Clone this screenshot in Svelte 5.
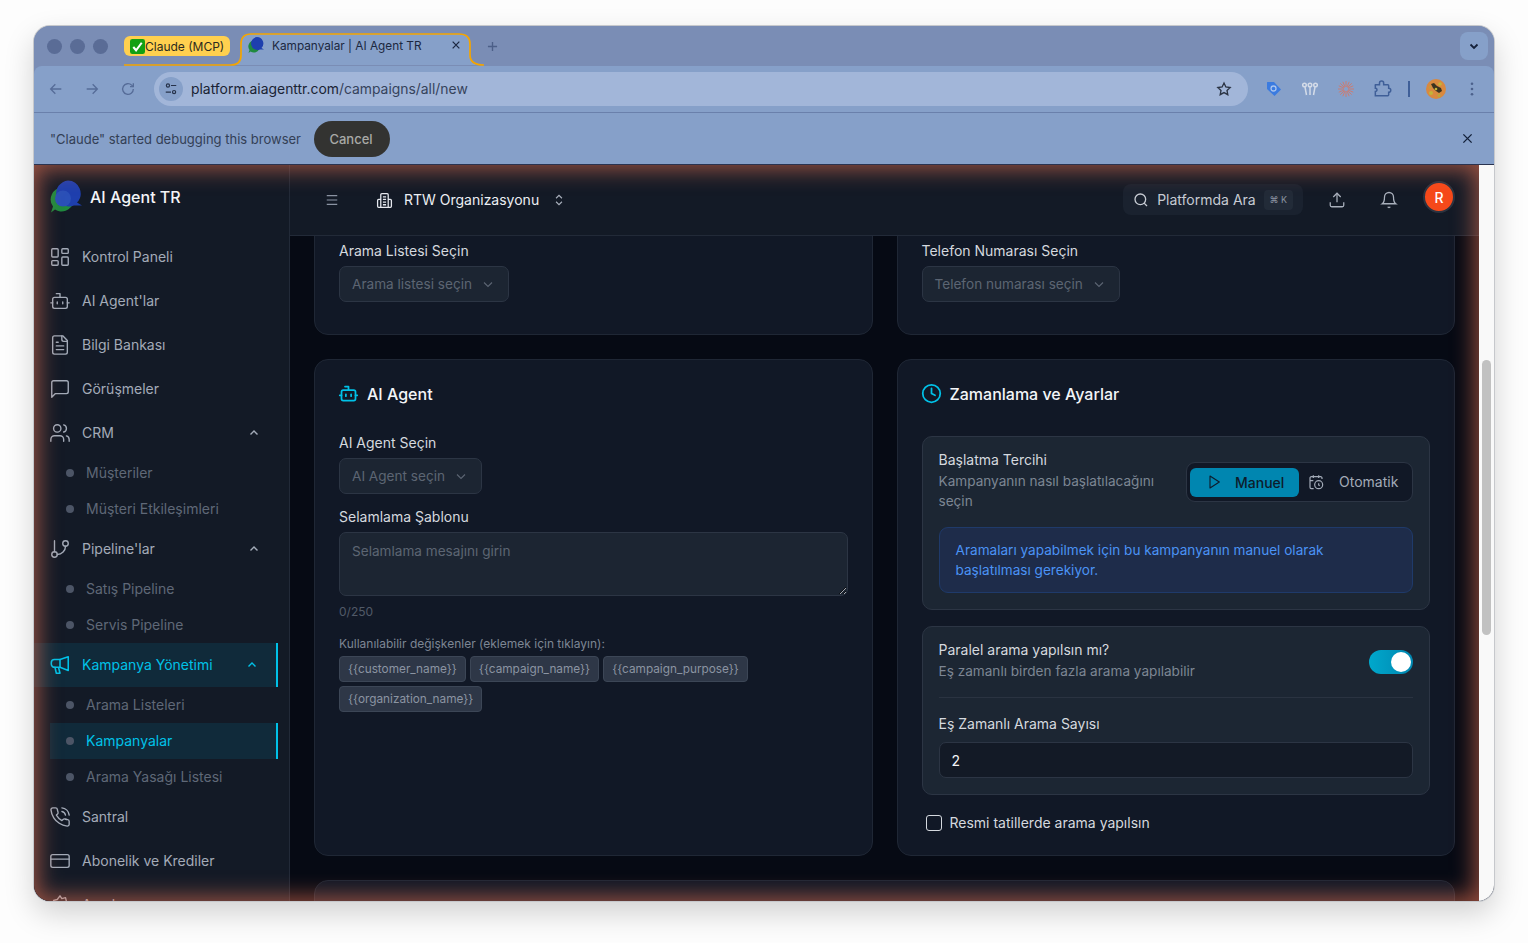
<script>
  const icons = {
    dashboard: '<rect width="7" height="9" x="3" y="3" rx="1"/><rect width="7" height="5" x="14" y="3" rx="1"/><rect width="7" height="9" x="14" y="12" rx="1"/><rect width="7" height="5" x="3" y="16" rx="1"/>',
    bot: '<path d="M12 8V4H8"/><rect width="16" height="12" x="4" y="8" rx="2"/><path d="M2 14h2"/><path d="M20 14h2"/><path d="M15 13v2"/><path d="M9 13v2"/>',
    file: '<path d="M15 2H6a2 2 0 0 0-2 2v16a2 2 0 0 0 2 2h12a2 2 0 0 0 2-2V7Z"/><path d="M14 2v4a2 2 0 0 0 2 2h4"/><path d="M10 9H8"/><path d="M16 13H8"/><path d="M16 17H8"/>',
    message: '<path d="M21 15a2 2 0 0 1-2 2H7l-4 4V5a2 2 0 0 1 2-2h14a2 2 0 0 1 2 2z"/>',
    users: '<path d="M16 21v-2a4 4 0 0 0-4-4H6a4 4 0 0 0-4 4v2"/><circle cx="9" cy="7" r="4"/><path d="M22 21v-2a4 4 0 0 0-3-3.87"/><path d="M16 3.13a4 4 0 0 1 0 7.75"/>',
    branch: '<line x1="6" x2="6" y1="3" y2="15"/><circle cx="18" cy="6" r="3"/><circle cx="6" cy="18" r="3"/><path d="M18 9a9 9 0 0 1-9 9"/>',
    megaphone: '<path d="M21 3v15l-9-3.5H6a3.5 3.5 0 0 1-3.500-3.500V9.500A3.500 3.500 0 0 1 6 6h6z"/><path d="M12 6v8.500"/><path d="M6.500 14.500l1.500 6.500h4l-1.500-6"/>',
    phone: '<path d="M22 16.920v3a2 2 0 0 1-2.180 2 19.790 19.790 0 0 1-8.630-3.070 19.500 19.500 0 0 1-6-6 19.790 19.790 0 0 1-3.070-8.670A2 2 0 0 1 4.110 2h3a2 2 0 0 1 2 1.720 12.840 12.840 0 0 0 .7 2.810 2 2 0 0 1-.45 2.110L8.090 9.910a16 16 0 0 0 6 6l1.270-1.270a2 2 0 0 1 2.110-.45 12.840 12.840 0 0 0 2.810.7A2 2 0 0 1 22 16.920z"/><path d="M14.050 2a9 9 0 0 1 8 7.940"/><path d="M14.050 6A5 5 0 0 1 18 10"/>',
    card: '<rect width="20" height="14" x="2" y="5" rx="2"/><line x1="2" x2="22" y1="10" y2="10"/>',
    settings: '<circle cx="12" cy="12" r="3"/><path d="M12 2l2 3 4-1 1 4 3 2-2 3 1 4-4 1-2 3-3-2-4 1-1-4-3-2 2-3-1-4 4-1z"/>'
  };

  const nav = [
    { label: "Kontrol Paneli", icon: "dashboard" },
    { label: "AI Agent'lar", icon: "bot" },
    { label: "Bilgi Bankası", icon: "file" },
    { label: "Görüşmeler", icon: "message" },
    { label: "CRM", icon: "users", open: true, children: [{ label: "Müşteriler" }, { label: "Müşteri Etkileşimleri" }] },
    { label: "Pipeline'lar", icon: "branch", open: true, children: [{ label: "Satış Pipeline" }, { label: "Servis Pipeline" }] },
    {
      label: "Kampanya Yönetimi",
      icon: "megaphone",
      open: true,
      active: true,
      children: [{ label: "Arama Listeleri" }, { label: "Kampanyalar", active: true }, { label: "Arama Yasağı Listesi" }]
    },
    { label: "Santral", icon: "phone" },
    { label: "Abonelik ve Krediler", icon: "card" },
    { label: "Ayarlar", icon: "settings" }
  ];

  const variables = ["{{customer_name}}", "{{campaign_name}}", "{{campaign_purpose}}", "{{organization_name}}"];
</script>

<div class="page">
  <div class="window">
    <div class="tabbar">
      <div class="lights"><span></span><span></span><span></span></div>
      <div class="group-chip">
        <svg class="check" viewBox="0 0 16 16"><rect width="16" height="16" rx="2.500" fill="#12a012" /><path d="M3.500 8.500l3 3.500 6-8" fill="none" stroke="#fff" stroke-width="2.200" /></svg>
        Claude (MCP)
      </div>
      <svg class="group-line" viewBox="0 0 370 36" fill="none">
        <path d="M107 34q10 0 10-10V13q0-10 10-10h208q11 0 11 10v11q0 10 10 10z" fill="#86a0c9" />
        <path d="M0 34h107q10 0 10-10V13q0-10 10-10h208q11 0 11 10v11q0 10 14 10" stroke="#f5a500" stroke-width="1.700" />
      </svg>
      <div class="tab">
        <svg class="favicon" viewBox="0 0 32 32">
          <path d="M12 7a12 12 0 1 1-7 22l-4 3 2-6A12 12 0 0 1 12 7z" fill="#1f8a3f" />
          <path d="M18 0a13 13 0 0 1 9 22l5 3-8 0A13 13 0 1 1 18 0z" fill="#1e3fae" />
        </svg>
        <span class="tab-title">Kampanyalar | AI Agent TR</span>
        <svg class="tab-x" viewBox="0 0 12 12" fill="none" stroke="#1d2a44" stroke-width="1.500"><path d="M2 2l8 8M10 2l-8 8" /></svg>
      </div>
      <svg class="plus" viewBox="0 0 12 12" fill="none" stroke="#4c5f88" stroke-width="1.500"><path d="M6 1v10M1 6h10" /></svg>
      <div class="tab-menu">
        <svg viewBox="0 0 12 12" fill="none" stroke="#15213a" stroke-width="1.800"><path d="M2.500 4.500L6 8l3.500-3.500" /></svg>
      </div>
    </div>

    <div class="toolbar">
      <svg class="tool" viewBox="0 0 24 24" fill="none" stroke="#566c98" stroke-width="2"><path d="M20 12H5M11 5l-7 7 7 7" /></svg>
      <svg class="tool" viewBox="0 0 24 24" fill="none" stroke="#566c98" stroke-width="2"><path d="M4 12h15M13 5l7 7-7 7" /></svg>
      <svg class="tool" viewBox="0 0 24 24" fill="none" stroke="#566c98" stroke-width="2"><path d="M20 12a8 8 0 1 1-2.500-5.800L20 8.500" /><path d="M20 3.500v5h-5" /></svg>
      <div class="urlbar">
        <div class="tune">
          <svg viewBox="0 0 16 16" fill="none" stroke="#26324a" stroke-width="1.400"><circle cx="4.500" cy="4" r="1.800" /><path d="M8 4h6M2 11.500h6" /><circle cx="11.500" cy="11.500" r="1.800" /></svg>
        </div>
        <span class="url"><b>platform.aiagenttr.com</b>/campaigns/all/new</span>
        <svg class="star" viewBox="0 0 24 24" fill="none" stroke="#2b3444" stroke-width="2"><path d="M12 3l2.800 5.900 6.400.8-4.700 4.400 1.200 6.400L12 17.400l-5.700 3.100 1.200-6.400L2.800 9.700l6.400-.8z" /></svg>
      </div>
      <div class="extensions">
        <svg viewBox="0 0 16 16"><path d="M1 1.500A.5.5 0 0 1 1.500 1H8l7 7.500-6.500 6.500L1 8z" fill="#3b7be0" /><circle cx="7.500" cy="7.500" r="2.500" fill="none" stroke="#a9c4ee" stroke-width="1.300" /></svg>
        <svg viewBox="0 0 16 16" fill="none" stroke="#d3dbe8" stroke-width="1.500"><circle cx="2.500" cy="4" r="1.800" /><circle cx="8" cy="4" r="1.800" /><circle cx="13.500" cy="4" r="1.800" /><path d="M3 6l1.500 8M8 6v8M13 6l-1.500 8" /></svg>
        <svg viewBox="0 0 16 16" fill="none" stroke="#d9735f" stroke-width="0.800"><path d="M8 0v6M8 10v6M0 8h6M10 8h6M2.300 2.300l4.200 4.200M9.500 9.500l4.200 4.200M13.700 2.300L9.500 6.500M6.500 9.500l-4.200 4.200M4.800 .8l2.200 5.200M9 10l2.200 5.200M11.200 .8L9 6M7 10l-2.200 5.200M.8 4.800L6 7M10 9l5.200 2.200M15.200 4.800L10 7M6 9L.8 11.200" /></svg>
        <svg class="puzzle" viewBox="0 0 24 24" fill="none" stroke="#3f5f98" stroke-width="1.800"><path d="M4 7h5V5a2.500 2.500 0 0 1 5 0v2h5a1 1 0 0 1 1 1v3a2.500 2.500 0 0 1 0 5v3a1 1 0 0 1-1 1H4v-5a2 2 0 0 0 0-4V8a1 1 0 0 1 0-1z" /></svg>
      </div>
      <span class="tool-sep"></span>
      <svg class="profile" viewBox="0 0 20 20">
        <circle cx="10" cy="10" r="10" fill="#d9893f" />
        <path d="M5 5l3-1 3 3 4 2 1 3-3 2-3-2-3-3z" fill="#3a3320" />
        <circle cx="5" cy="14" r="2" fill="#c2b43a" />
        <circle cx="14" cy="5" r="1.800" fill="#c2b43a" />
        <circle cx="10" cy="10" r="1.300" fill="#c2b43a" />
        <circle cx="13" cy="16.500" r="1.500" fill="#b9a83a" />
        <circle cx="4" cy="8.500" r="1" fill="#b9a83a" />
      </svg>
      <svg class="dots" viewBox="0 0 4 16" fill="#4c618c"><circle cx="2" cy="2" r="1.500" /><circle cx="2" cy="8" r="1.500" /><circle cx="2" cy="14" r="1.500" /></svg>
    </div>

    <div class="infobar">
      <span class="info-text">"Claude" started debugging this browser</span>
      <button class="cancel">Cancel</button>
      <svg class="info-x" viewBox="0 0 12 12" fill="none" stroke="#14213b" stroke-width="1.500"><path d="M1.500 1.500l9 9M10.500 1.500l-9 9" /></svg>
    </div>

    <div class="viewport">
      <aside class="sidebar">
        <div class="brand">
          <svg class="logo" viewBox="0 0 32 32">
            <path d="M12 7a12 12 0 1 1-7 22l-4 3 2-6A12 12 0 0 1 12 7z" fill="#1f8a3f" />
            <path d="M18 0a13 13 0 0 1 9 22l5 3-8 0A13 13 0 1 1 18 0z" fill="#1e3fae" />
            <circle cx="13" cy="18" r="8" fill="#2a50b8" />
          </svg>
          <span>AI Agent TR</span>
        </div>
        <nav>
          {#each nav as item}
            <div class="nav-item" class:active={item.active}>
              <svg class="nav-icon" viewBox="0 0 24 24" fill="none" stroke="currentColor" stroke-width="1.500" stroke-linecap="round" stroke-linejoin="round">{@html icons[item.icon]}</svg>
              <span class="nav-label">{item.label}</span>
              {#if item.open}
                <svg class="nav-chevron" viewBox="0 0 12 12" fill="none" stroke="currentColor" stroke-width="1.400"><path d="M2.500 7.500L6 4l3.500 3.500" /></svg>
              {/if}
            </div>
            {#if item.children}
              {#each item.children as child}
                <div class="sub-item" class:active={child.active}>
                  <span class="dot"></span>
                  <span>{child.label}</span>
                </div>
              {/each}
            {/if}
          {/each}
        </nav>
      </aside>

      <div class="main">
        <header class="topbar">
          <svg class="menu" viewBox="0 0 16 16" fill="none" stroke="#8b94a3" stroke-width="1.300"><path d="M2 3h12M2 8h12M2 13h12" /></svg>
          <svg class="org-icon" viewBox="0 0 16 16" fill="none" stroke="#e5e8ee" stroke-width="1.200"><path d="M4.500 14.500V2.500a1 1 0 0 1 1-1h5a1 1 0 0 1 1 1v12zM4.500 7H2.500a1 1 0 0 0-1 1v5.500a1 1 0 0 0 1 1h11a1 1 0 0 0 1-1V8a1 1 0 0 0-1-1h-2M6.500 4.500h3M6.500 7h3M6.500 9.500h3M6.500 12h3" /></svg>
          <span class="org">RTW Organizasyonu</span>
          <svg class="updown" viewBox="0 0 24 24" fill="none" stroke="#a9b0bc" stroke-width="2"><path d="M7 15l5 5 5-5" /><path d="M7 9l5-5 5 5" /></svg>
          <div class="search">
            <svg viewBox="0 0 24 24" fill="none" stroke="#c6cbd3" stroke-width="2"><circle cx="11" cy="11" r="8" /><path d="M21 21l-4.300-4.300" /></svg>
            <span>Platformda Ara</span>
            <kbd>⌘ K</kbd>
          </div>
          <svg class="top-icon first" viewBox="0 0 24 24" fill="none" stroke="#a9b0bc" stroke-width="1.700"><path d="M21 15v4a2 2 0 0 1-2 2H5a2 2 0 0 1-2-2v-4" /><path d="M17 8l-5-5-5 5" /><path d="M12 3v12" /></svg>
          <svg class="top-icon second" viewBox="0 0 24 24" fill="none" stroke="#a9b0bc" stroke-width="1.700"><path d="M6 8a6 6 0 0 1 12 0c0 7 3 9 3 9H3s3-2 3-9" /><path d="M10.300 21a1.940 1.940 0 0 0 3.400 0" /></svg>
          <div class="avatar">R</div>
        </header>

        <div class="scroller">
          <div class="content">
            <section class="card top-card">
              <label class="label" for="list">Arama Listesi Seçin</label>
              <button id="list" class="select">Arama listesi seçin
                <svg viewBox="0 0 12 12" fill="none" stroke="currentColor" stroke-width="1.100"><path d="M2 4.500L6 8.500l4-4" /></svg>
              </button>
            </section>
            <section class="card top-card">
              <label class="label" for="phone">Telefon Numarası Seçin</label>
              <button id="phone" class="select">Telefon numarası seçin
                <svg viewBox="0 0 12 12" fill="none" stroke="currentColor" stroke-width="1.100"><path d="M2 4.500L6 8.500l4-4" /></svg>
              </button>
            </section>

            <section class="card">
              <h2>
                <svg viewBox="0 0 24 24" fill="none" stroke="#00c2e8" stroke-width="2" stroke-linecap="round" stroke-linejoin="round">{@html icons.bot}</svg>
                AI Agent
              </h2>
              <label class="label first-label" for="agent">AI Agent Seçin</label>
              <button id="agent" class="select">AI Agent seçin
                <svg viewBox="0 0 12 12" fill="none" stroke="currentColor" stroke-width="1.100"><path d="M2 4.500L6 8.500l4-4" /></svg>
              </button>
              <label class="label second-label" for="greeting">Selamlama Şablonu</label>
              <textarea id="greeting" placeholder="Selamlama mesajını girin"></textarea>
              <p class="counter">0/250</p>
              <p class="hint">Kullanılabilir değişkenler (eklemek için tıklayın):</p>
              <div class="chips">
                {#each variables as variable}
                  <span class="chip">{variable}</span>
                {/each}
              </div>
            </section>

            <section class="card">
              <h2>
                <svg viewBox="0 0 24 24" fill="none" stroke="#00c2e8" stroke-width="2" stroke-linecap="round" stroke-linejoin="round"><circle cx="12" cy="12" r="10" /><path d="M12 6v6l4 2" /></svg>
                Zamanlama ve Ayarlar
              </h2>
              <div class="panel">
                <div class="start-row">
                  <div class="start-text">
                    <div class="panel-title">Başlatma Tercihi</div>
                    <div class="panel-sub">Kampanyanın nasıl başlatılacağını seçin</div>
                  </div>
                  <div class="segmented">
                    <div class="seg on">
                      <svg viewBox="0 0 24 24" fill="none" stroke="currentColor" stroke-width="1.700" stroke-linejoin="round"><path d="M6 3l14 9-14 9z" /></svg>
                      Manuel
                    </div>
                    <div class="seg">
                      <svg viewBox="0 0 24 24" fill="none" stroke="currentColor" stroke-width="1.800"><path d="M21 7.500V6a2 2 0 0 0-2-2H5a2 2 0 0 0-2 2v14a2 2 0 0 0 2 2h3.500" /><path d="M16 2v4M8 2v4M3 10h5" /><path d="M17.500 17.500L16 16.300V14" /><circle cx="16" cy="16" r="6" /></svg>
                      Otomatik
                    </div>
                  </div>
                </div>
                <div class="notice">Aramaları yapabilmek için bu kampanyanın manuel olarak başlatılması gerekiyor.</div>
              </div>

              <div class="panel second-panel">
                <div class="parallel-row">
                  <div>
                    <div class="panel-title">Paralel arama yapılsın mı?</div>
                    <div class="panel-sub">Eş zamanlı birden fazla arama yapılabilir</div>
                  </div>
                  <div class="switch"><span></span></div>
                </div>
                <div class="divider"></div>
                <label class="panel-title count-label" for="count">Eş Zamanlı Arama Sayısı</label>
                <input id="count" class="count" value="2" />
              </div>

              <div class="holiday">
                <span class="box"></span>
                <span class="holiday-text">Resmi tatillerde arama yapılsın</span>
              </div>
            </section>

            <section class="card last-card"></section>
          </div>
        </div>
      </div>

      <div class="page-scroll"><span></span></div>
      <div class="glow"></div>
    </div>
  </div>
</div>

<style>
  :global(body) {
    margin: 0;
    background: #fff;
    font-family: Inter, "Noto Sans", sans-serif;
    overflow: hidden;
  }

  .page {
    height: 943px;
    padding: 26px 34px 0;
    box-sizing: border-box;
    background: #fdfdfd;
  }

  .window {
    width: 1460px;
    height: 875px;
    border-radius: 16px;
    overflow: hidden;
    display: flex;
    flex-direction: column;
    background: #7a8db5;
    box-shadow: 0 0 0 1px #c6c8cc, 0 12px 30px rgba(0, 0, 0, 0.18);
  }

  /* browser chrome */
  .tabbar {
    position: relative;
    height: 40px;
    flex: none;
    display: flex;
    align-items: center;
    background: #7a8db5;
  }

  .lights {
    display: flex;
    gap: 8px;
    margin-left: 13px;
  }

  .lights span {
    width: 15px;
    height: 15px;
    border-radius: 50%;
    background: #5a6c96;
  }

  .group-chip {
    display: flex;
    align-items: center;
    width: 106px;
    height: 20px;
    box-sizing: border-box;
    margin-left: 16px;
    padding-left: 6px;
    border-radius: 6px;
    background: #ffd04f;
    color: #2c2a20;
    font-size: 12px;
    white-space: nowrap;
  }

  .check {
    width: 15px;
    height: 15px;
    flex: none;
  }

  .group-line {
    position: absolute;
    left: 90px;
    top: 5px;
    width: 370px;
    height: 36px;
  }

  .tab {
    position: relative;
    display: flex;
    align-items: center;
    width: 228px;
    height: 34px;
    margin-left: 11px;
    flex: none;
  }

  .favicon {
    width: 16px;
    height: 16px;
    margin-left: 7px;
    margin-top: -2px;
  }

  .tab-title {
    margin-left: 8px;
    font-size: 11.800px;
    color: #1c2840;
    white-space: nowrap;
  }

  .tab-x {
    width: 10px;
    height: 10px;
    position: absolute;
    left: 210px;
    top: 11px;
  }

  .plus {
    width: 11px;
    height: 11px;
    margin-left: 18px;
    position: relative;
  }

  .tab-menu {
    margin-left: auto;
    margin-right: 6px;
    width: 28px;
    height: 28px;
    border-radius: 8px;
    background: #86a0c9;
    display: flex;
    align-items: center;
    justify-content: center;
  }

  .tab-menu svg {
    width: 12px;
    height: 12px;
  }

  .toolbar {
    height: 47px;
    box-sizing: border-box;
    flex: none;
    display: flex;
    align-items: center;
    background: #86a0c9;
    border-bottom: 1px solid #6a80ab;
    border-radius: 8px 8px 0 0;
    padding-left: 14px;
  }

  .tool {
    width: 16px;
    height: 16px;
    margin-right: 20px;
  }

  .tool:nth-child(3) {
    margin-right: 18px;
  }

  .urlbar {
    width: 1094px;
    height: 34px;
    border-radius: 17px;
    background: #a2b6d9;
    display: flex;
    align-items: center;
    flex: none;
  }

  .tune {
    width: 24px;
    height: 24px;
    margin-left: 5px;
    border-radius: 50%;
    background: #86a0c9;
    display: flex;
    align-items: center;
    justify-content: center;
  }

  .tune svg {
    width: 14px;
    height: 14px;
  }

  .url {
    margin-left: 8px;
    font-size: 13.900px;
    color: #36435c;
  }

  .url b {
    font-weight: 400;
    color: #1a2334;
  }

  .star {
    width: 16px;
    height: 16px;
    margin-left: auto;
    margin-right: 16px;
  }

  .extensions {
    display: flex;
    align-items: center;
    gap: 20px;
    margin-left: 18px;
  }

  .extensions svg {
    width: 16px;
    height: 16px;
  }

  .extensions .puzzle {
    width: 20px;
    height: 20px;
    margin: 0 -2px;
  }

  .tool-sep {
    width: 2px;
    height: 16px;
    margin-left: 18px;
    background: #3f5f98;
  }

  .profile {
    width: 20px;
    height: 20px;
    margin-left: 16px;
  }

  .dots {
    width: 4px;
    height: 14px;
    margin-left: 24px;
  }

  .infobar {
    height: 52px;
    flex: none;
    display: flex;
    align-items: center;
    background: #86a0c9;
    padding-left: 16px;
    border-bottom: 1px solid #2a3350;
    box-sizing: border-box;
  }

  .info-text {
    font-size: 13px;
    color: #333f56;
  }

  .cancel {
    width: 76px;
    height: 36px;
    margin-left: 13px;
    padding: 0 2px 0 0;
    border: 0;
    border-radius: 18px;
    background: #333331;
    color: #a9a9a6;
    font: 500 13px Inter, sans-serif;
  }

  .info-x {
    width: 11px;
    height: 11px;
    margin-left: auto;
    margin-right: 21px;
  }

  /* page */
  .viewport {
    position: relative;
    flex: 1;
    min-height: 0;
    display: flex;
    background: #060a14;
  }

  .sidebar {
    width: 256px;
    flex: none;
    box-sizing: border-box;
    background: #131a26;
    border-right: 1px solid #222a38;
    overflow: hidden;
  }

  .brand {
    height: 70px;
    box-sizing: border-box;
    display: flex;
    align-items: flex-start;
    padding: 15px 0 0 16px;
    color: #f3f5f8;
    font-size: 16px;
    font-weight: 500;
  }

  .brand span {
    margin-left: 8px;
    margin-top: 7px;
  }

  .logo {
    width: 32px;
    height: 33px;
  }

  nav {
    padding-right: 11px;
  }

  .nav-item {
    display: flex;
    align-items: center;
    height: 44px;
    padding-left: 15px;
    padding-right: 17px;
    padding-bottom: 2px;
    box-sizing: border-box;
    color: #a3abb8;
    font-size: 14px;
  }

  .nav-icon {
    width: 22px;
    height: 22px;
    flex: none;
    margin-top: 2px;
  }

  .nav-label {
    margin-left: 11px;
  }

  .nav-chevron {
    width: 12px;
    height: 12px;
    margin-left: auto;
    margin-top: 2px;
    margin-right: 1px;
  }

  .nav-item.active {
    background: #102a3a;
    color: #00c2e8;
    border-right: 2px solid #00c2e8;
  }

  .nav-item.active .nav-icon {
    stroke-width: 1.700;
  }

  .sub-item {
    display: flex;
    align-items: center;
    height: 36px;
    margin-left: 16px;
    padding-left: 16px;
    padding-bottom: 2px;
    box-sizing: border-box;
    color: #5f6877;
    font-size: 14px;
  }

  .dot {
    width: 8px;
    height: 8px;
    border-radius: 50%;
    background: #4c5566;
    margin-right: 12px;
    margin-top: 2px;
  }

  .sub-item.active {
    background: #102a3a;
    color: #00c2e8;
    border-right: 2px solid #00c2e8;
  }

  .main {
    flex: 1;
    min-width: 0;
    display: flex;
    flex-direction: column;
  }

  .topbar {
    height: 71px;
    flex: none;
    box-sizing: border-box;
    display: flex;
    align-items: center;
    background: #131a26;
    border-bottom: 1px solid #222a38;
    padding-left: 35px;
  }

  .menu {
    width: 14px;
    height: 14px;
  }

  .org-icon {
    width: 17px;
    height: 17px;
    margin-left: 37px;
  }

  .org {
    margin-left: 11px;
    margin-top: -1px;
    color: #eceff3;
    font-size: 14px;
  }

  .updown {
    width: 14px;
    height: 14px;
    margin-left: 13px;
  }

  .search {
    display: flex;
    align-items: center;
    width: 180px;
    height: 31px;
    box-sizing: border-box;
    margin-left: 557px;
    margin-top: -1px;
    padding-left: 10px;
    border-radius: 8px;
    background: #1a222f;
    color: #c6cbd3;
    font-size: 14px;
  }

  .search svg {
    width: 16px;
    height: 16px;
  }

  .search span {
    margin-left: 8px;
    white-space: nowrap;
  }

  kbd {
    margin-left: 8px;
    width: 29px;
    height: 20px;
    border-radius: 4px;
    background: #222b38;
    color: #8a93a0;
    font: 9px Inter, "DejaVu Sans", sans-serif;
    display: flex;
    align-items: center;
    justify-content: center;
  }

  .top-icon {
    width: 18px;
    height: 18px;
  }

  .top-icon.first {
    margin-left: 25px;
  }

  .top-icon.second {
    margin-left: 34px;
  }

  .avatar {
    width: 28px;
    height: 28px;
    margin-left: 25px;
    margin-top: -6px;
    border-radius: 50%;
    background: #f5491a;
    border: 2px solid #2b3340;
    color: #fff;
    font-size: 14px;
    font-weight: 500;
    display: flex;
    align-items: center;
    justify-content: center;
  }

  .scroller {
    flex: 1;
    min-height: 0;
    overflow: hidden;
  }

  .content {
    display: grid;
    grid-template-columns: 1fr 1fr;
    gap: 24px;
    padding: 0 24px;
    margin-top: -40px;
  }

  .card {
    box-sizing: border-box;
    background: #111826;
    border: 1px solid #1f2735;
    border-radius: 14px;
    padding: 24px;
  }

  .top-card {
    height: 139px;
    padding-top: 44px;
  }

  .last-card {
    grid-column: 1 / -1;
    height: 200px;
  }

  .label {
    display: block;
    color: #d5d9df;
    font-size: 14px;
    line-height: 20px;
  }

  .select {
    display: flex;
    align-items: center;
    gap: 10px;
    height: 36px;
    margin-top: 5px;
    padding: 0 14px 0 12px;
    border: 1px solid #2c3544;
    border-radius: 7px;
    background: #1c2532;
    color: #5c6573;
    font: 13.600px Inter, sans-serif;
  }

  .select svg {
    width: 12px;
    height: 12px;
  }

  h2 {
    display: flex;
    align-items: center;
    gap: 8px;
    height: 19px;
    margin: 0;
    color: #f3f5f8;
    font-size: 16px;
    font-weight: 500;
  }

  h2 svg {
    width: 21px;
    height: 21px;
    margin-left: -1px;
    flex: none;
  }

  .first-label {
    margin-top: 30px;
  }

  .second-label {
    margin-top: 13px;
  }

  textarea {
    display: block;
    width: 100%;
    height: 64px;
    box-sizing: border-box;
    margin-top: 5px;
    padding: 8px 12px;
    border: 1px solid #2c3544;
    border-radius: 7px;
    background: #1c2532;
    color: #d5d9df;
    font: 13.600px/20px Inter, sans-serif;
    resize: vertical;
    outline: 0;
  }

  textarea::placeholder {
    color: #5c6573;
  }

  .counter {
    margin: 8px 0 0;
    color: #515a68;
    font-size: 12px;
    line-height: 16px;
  }

  .hint {
    margin: 16px 0 0;
    color: #7d8694;
    font-size: 12px;
    line-height: 16px;
  }

  .chips {
    display: flex;
    flex-wrap: wrap;
    gap: 4px;
    margin-top: 4px;
  }

  .chip {
    height: 26px;
    box-sizing: border-box;
    padding: 0 8px;
    border: 1px solid #3c4656;
    border-radius: 4px;
    background: #2e3747;
    color: #8b94a2;
    font-size: 11.800px;
    line-height: 24px;
  }

  .panel {
    margin-top: 33px;
    padding: 13px 16px 16px;
    border: 1px solid #2c3544;
    border-radius: 10px;
    background: #1c2633;
  }

  .second-panel {
    margin-top: 16px;
  }

  .start-row {
    display: flex;
    align-items: center;
    gap: 16px;
  }

  .start-text {
    flex: 1;
  }

  .panel-title {
    color: #d5d9df;
    font-size: 14px;
    line-height: 20px;
  }

  .panel-sub {
    margin-top: 1px;
    color: #7d8694;
    font-size: 13.600px;
    line-height: 20px;
  }

  .segmented {
    display: flex;
    align-items: center;
    flex: none;
    width: 227px;
    height: 40px;
    box-sizing: border-box;
    margin-top: 2px;
    padding: 0 3px;
    border: 1px solid #2c3544;
    border-radius: 9px;
    background: #111826;
  }

  .seg {
    display: flex;
    align-items: center;
    gap: 15px;
    color: #a3abb8;
    font-size: 14px;
    padding-left: 9px;
  }

  .seg svg {
    width: 16px;
    height: 16px;
  }

  .seg.on {
    width: 109px;
    height: 29px;
    box-sizing: border-box;
    margin-top: 1px;
    padding-left: 16px;
    gap: 13px;
    border-radius: 6px;
    background: #0086b0;
    color: #0d1c2c;
    font-weight: 500;
  }

  .notice {
    margin-top: 16px;
    padding: 12px 16px;
    border: 1px solid #1f3a6a;
    border-radius: 9px;
    background: #1e2c4a;
    color: #4b93f5;
    font-size: 13.600px;
    line-height: 20px;
  }

  .parallel-row {
    display: flex;
    justify-content: space-between;
    align-items: center;
    padding-bottom: 16px;
  }

  .switch {
    width: 44px;
    height: 24px;
    border-radius: 12px;
    background: linear-gradient(90deg, #00a8cc, #0086b0);
    display: flex;
    align-items: center;
    justify-content: flex-end;
    padding-right: 2px;
    box-sizing: border-box;
    margin-top: 3px;
  }

  .switch span {
    width: 20px;
    height: 20px;
    border-radius: 50%;
    background: #fff;
  }

  .divider {
    height: 1px;
    background: #2a3341;
  }

  .count-label {
    display: block;
    margin-top: 16px;
  }

  .count {
    display: block;
    width: 100%;
    height: 36px;
    box-sizing: border-box;
    margin-top: 8px;
    padding: 0 12px;
    border: 1px solid #2c3544;
    border-radius: 7px;
    background: #131a26;
    color: #f3f5f8;
    font: 14px Inter, sans-serif;
    outline: 0;
  }

  .holiday {
    display: flex;
    align-items: center;
    gap: 8px;
    height: 16px;
    margin-top: 20px;
    margin-left: 4px;
    color: #d5d9df;
    font-size: 14px;
  }

  .holiday-text {
    margin-top: -2px;
  }

  .box {
    width: 16px;
    height: 16px;
    box-sizing: border-box;
    border: 1px solid #d5d9df;
    border-radius: 3px;
  }

  .page-scroll {
    width: 15px;
    flex: none;
    background: #f9f9f9;
    box-sizing: border-box;
    padding: 195px 3px 0 3px;
    position: relative;
    z-index: 2;
  }

  .page-scroll span {
    display: block;
    height: 275px;
    border-radius: 5px;
    background: #c1c1c1;
  }

  .glow {
    position: absolute;
    left: 0;
    top: 0;
    right: 15px;
    bottom: 0;
    pointer-events: none;
    box-shadow: inset 0 0 22px 4px rgba(245, 120, 85, 0.6);
  }
</style>
